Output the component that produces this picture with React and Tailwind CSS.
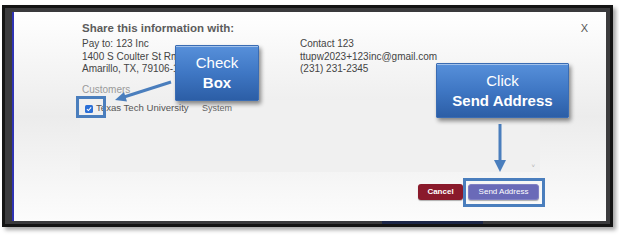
import React from 'react';

const sans = { fontFamily: '"Liberation Sans", Arial, sans-serif' };

const Callout = ({ top, bottom, className }) => (
  <div
    className={`absolute flex flex-col items-center justify-center rounded-[1px] border border-[#3a6cb3] bg-linear-to-b from-[#5790da] via-[#3f77c4] to-[#2c5ea6] text-white text-[15px] leading-[20px] shadow-[2px_3px_4px_rgba(0,0,0,0.45),inset_0_1px_0_rgba(255,255,255,0.45)] ${className}`}
  >
    <span>{top}</span>
    <span className="font-bold">{bottom}</span>
  </div>
);

const Checkbox = () => (
  <span className="flex h-[8px] w-[8px] items-center justify-center rounded-[1.5px] bg-[#2b6fd6]">
    <svg width="6" height="6" viewBox="0 0 10 10">
      <path d="M1.5 5.2 4 7.6 8.6 2.4" fill="none" stroke="#fff" strokeWidth="1.8" />
    </svg>
  </span>
);

export default function App() {
  return (
    <div className="relative h-[236px] w-[619px] overflow-hidden bg-white" style={sans}>
      {/* screenshot frame */}
      <div className="ml-[2px] mt-[5px] flex h-[222px] w-[611px] flex-col overflow-hidden border-[3px] border-[#141414] bg-[#3b3b3d] pl-[7px] pr-[4px] pt-[4px] shadow-[3px_3px_4px_rgba(0,0,0,0.35)]">
        {/* modal */}
        <div className="relative flex flex-1 flex-col border-l-2 border-[#2f33b4] bg-linear-to-b from-white via-[#ececec] via-50% to-[#fcfcfc] pl-[68px] pr-[18px] pt-[9px]">
          <div className="flex items-center justify-between">
            <h3 className="text-[11.5px] font-bold leading-[14px] text-[#5c5c5c]">Share this information with:</h3>
            <span className="text-[11px] leading-[14px] text-[#555]">X</span>
          </div>

          <div className="mt-[3px] flex text-[10px] leading-[12.5px] text-[#444]">
            <div className="w-[218px]">
              <p>Pay to: 123 Inc</p>
              <p>1400 S Coulter St Rm 100</p>
              <p>Amarillo, TX, 79106-1234</p>
            </div>
            <div>
              <p>Contact 123</p>
              <p>ttupw2023+123inc@gmail.com</p>
              <p>(231) 231-2345</p>
            </div>
          </div>

          <p className="mt-[8px] text-[10px] leading-[12px] text-[#9a9a9a]">Customers</p>

          {/* list box */}
          <div className="relative ml-[-2px] mt-[4px] h-[72px] w-[460px] bg-[#f0f0f0] pl-[5px] pt-[3px]">
            <div className="flex h-[12px] items-center">
              <Checkbox />
              <span className="ml-[3px] w-[106px] text-[9.6px] text-[#555]">Texas Tech University</span>
              <span className="text-[9px] text-[#666]">System</span>
            </div>
            <span className="absolute bottom-[3px] right-[5px] text-[6px] leading-none text-[#aaa]">˅</span>
          </div>

          <div className="mt-[12px] flex w-[457px] justify-end gap-[5px]">
            <button className="h-[16px] w-[45px] rounded-[3px] bg-[#8a1a2b] text-[8px] font-bold text-white shadow-[0_1px_1px_rgba(0,0,0,0.3)]">
              Cancel
            </button>
            <button className="h-[16px] w-[71px] rounded-[3px] border border-[#8080c4] bg-[#6a6ab8] text-[8px] text-white shadow-[0_1px_1px_rgba(0,0,0,0.3)]">
              Send Address
            </button>
          </div>
        </div>

        {/* page behind the modal */}
        <div className="flex h-[3px] shrink-0">
          <span className="ml-[370px] w-[101px] bg-[#1d2748]" />
        </div>
      </div>

      {/* annotations */}
      <div className="absolute left-[76px] top-[96px] h-[22px] w-[30px] border-[3px] border-[#4a7ebd]" />
      <div className="absolute left-[463px] top-[178px] h-[29px] w-[82px] border-[3px] border-[#4a7ebd]" />

      <svg className="pointer-events-none absolute left-0 top-0" width="619" height="236">
        <line x1="171" y1="82" x2="124" y2="97" stroke="#4a7ebd" strokeWidth="3" />
        <polygon points="115,100 127,101.5 124,92" fill="#4a7ebd" />
        <line x1="500" y1="124" x2="500" y2="161" stroke="#4a7ebd" strokeWidth="3" />
        <polygon points="494,160 506,160 500,172" fill="#4a7ebd" />
      </svg>

      <Callout top="Check" bottom="Box" className="left-[175px] top-[45px] h-[56px] w-[84px]" />
      <Callout top="Click" bottom="Send Address" className="left-[436px] top-[63px] h-[55px] w-[133px]" />
    </div>
  );
}
